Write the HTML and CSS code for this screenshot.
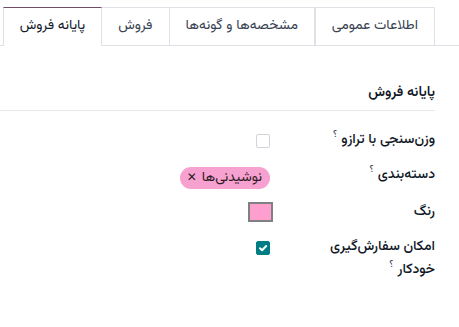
FILE: index.html
```html
<!DOCTYPE html>
<html lang="fa" dir="rtl">
<head>
<meta charset="utf-8">
<title>پایانه فروش</title>
<link rel="stylesheet" href="styles.css">
</head>
<body>
<div class="page">
  <ul class="tabs">
    <li class="tab">اطلاعات عمومی</li>
    <li class="tab">مشخصه‌ها و گونه‌ها</li>
    <li class="tab">فروش</li>
    <li class="tab active">پایانه فروش</li>
  </ul>
  <div class="content">
    <div class="group">
      <div class="group-title">پایانه فروش</div>
      <div class="fields">
        <div class="label"><span class="label-text">وزن‌سنجی با ترازو<sup class="help">؟</sup></span></div>
        <div class="value"><span class="checkbox"></span></div>

        <div class="label"><span class="label-text">دسته‌بندی<sup class="help">؟</sup></span></div>
        <div class="value"><span class="tag">نوشیدنی‌ها<span class="tag-x">✕</span></span></div>

        <div class="label"><span class="label-text">رنگ</span></div>
        <div class="value"><span class="swatch"></span></div>

        <div class="label"><span class="label-text">امکان سفارش‌گیری خودکار<sup class="help">؟</sup></span></div>
        <div class="value"><span class="checkbox checked"><svg viewBox="0 0 14 14" width="14" height="14"><path d="M4 7.2 L6.1 9.2 L10.2 5" fill="none" stroke="#fff" stroke-width="2" stroke-linecap="round" stroke-linejoin="round"/></svg></span></div>
      </div>
    </div>
  </div>
</div>
</body>
</html>
```
FILE: styles.css
```css
html, body {
  margin: 0;
  padding: 0;
  background: #fff;
}
body {
  font-family: "Vazirmatn", "Noto Sans Arabic", "DejaVu Sans", sans-serif;
  font-size: 14px;
  color: #374151;
}
.page {
  width: 459px;
  padding-top: 7px;
}
.tabs {
  list-style: none;
  margin: 0;
  padding: 0 24px 0 0;
  display: flex;
  border-bottom: 1px solid #dee2e6;
}
.tab {
  height: 37px;
  line-height: 37px;
  padding: 0 16px;
  border: 1px solid #dee2e6;
  border-bottom: none;
  margin-left: -1px;
  margin-bottom: -1px;
  color: #374151;
  background: #fff;
  white-space: nowrap;
}
.tab:first-child {
  margin-left: 0;
}
.tab.active {
  border-top-color: #714b67;
  color: #111827;
  height: 38px;
}
.content {
  padding: 0 24px 0 0;
}
.group {
  padding-top: 36px;
}
.group-title {
  font-weight: 600;
  color: #111827;
  line-height: 22px;
  padding-bottom: 6px;
  border-bottom: 1px solid #e5e7eb;
}
.fields {
  display: grid;
  grid-template-columns: 150px 1fr;
  column-gap: 15px;
  row-gap: 12px;
  margin-top: 18px;
}
.label {
  line-height: 23px;
  color: #111827;
  font-weight: 500;
}
.label-text {
  display: inline-block;
  max-width: 128px;
  line-height: 23px;
}
.help {
  font-size: 10px;
  font-weight: 400;
  margin-right: 4px;
  vertical-align: 6px;
  line-height: 0;
  color: #374151;
}
.value {
  display: flex;
  align-items: flex-start;
  min-height: 23px;
}
.checkbox {
  display: block;
  box-sizing: border-box;
  width: 14px;
  height: 14px;
  margin-top: 5px;
  border: 1px solid #d1d5db;
  border-radius: 2px;
  background: #fff;
}
.checkbox.checked {
  background: #017e84;
  border-color: #017e84;
  margin-top: 5px;
  position: relative;
}
.checkbox.checked svg {
  position: absolute;
  top: -1px;
  right: -1px;
}
.tag {
  display: inline-flex;
  align-items: center;
  height: 22px;
  margin-top: 3px;
  padding: 0 8px 0 7px;
  border-radius: 11px;
  background: #f7a1d0;
  color: #2d1b26;
  font-size: 14px;
  white-space: nowrap;
}
.tag-x {
  font-size: 12px;
  font-weight: 700;
  margin-right: 5px;
  color: #2d1b26;
}
.swatch {
  display: block;
  box-sizing: border-box;
  width: 25px;
  height: 20px;
  margin-top: 1px;
  margin-right: -3px;
  border: 2px solid #808080;
  background: #ff9fd0;
}
```
